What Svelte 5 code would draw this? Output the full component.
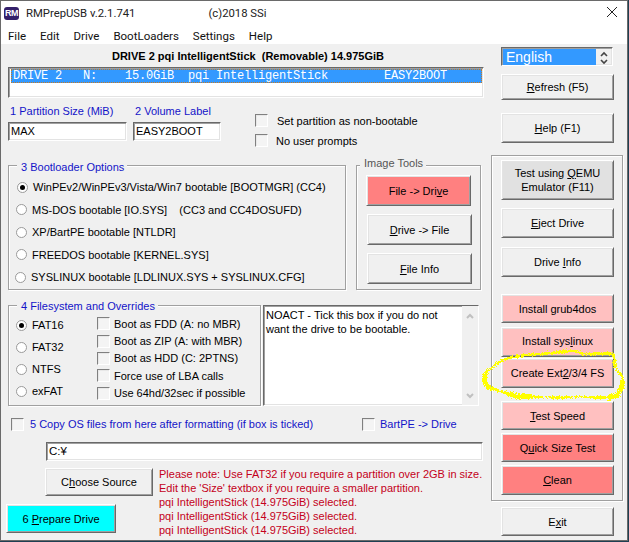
<script>
  const loaders = [
    { text: 'WinPEv2/WinPEv3/Vista/Win7 bootable [BOOTMGR] (CC4)', on: true, nudge: 1 },
    { text: 'MS-DOS bootable [IO.SYS]    (CC3 and CC4DOSUFD)', nudge: 0 },
    { text: 'XP/BartPE bootable [NTLDR]', nudge: 0 },
    { text: 'FREEDOS bootable [KERNEL.SYS]', nudge: 0 },
    { text: 'SYSLINUX bootable [LDLINUX.SYS + SYSLINUX.CFG]', nudge: -1 }
  ];
  const filesystems = [{ text: 'FAT16', on: true }, { text: 'FAT32' }, { text: 'NTFS' }, { text: 'exFAT' }];
  const overrides = ['Boot as FDD (A: no MBR)', 'Boot as ZIP (A: with MBR)', 'Boot as HDD (C: 2PTNS)', 'Force use of LBA calls', 'Use 64hd/32sec if possible'];
  const menu = ['File', 'Edit', 'Drive', 'BootLoaders', 'Settings', 'Help'];
  const row = 'DRIVE 2   N:    15.0GiB  pqi IntelligentStick        EASY2BOOT';
</script>

<div class="win">
  <header class="title">
    <span class="logo">RM</span>
    <span class="appname">RMPrepUSB v.2.1.741</span>
    <span class="copy">(c)2018 SSi</span>
    <svg class="close" width="10" height="10" viewBox="0 0 10 10"><path d="M0 0L10 10M10 0L0 10" stroke="#222" stroke-width="1" fill="none"/></svg>
  </header>
  <nav class="menu">
    {#each menu as m}<span>{m}</span>{/each}
  </nav>

  <div class="client">
    <main class="main">
      <div class="drive">DRIVE 2 pqi IntelligentStick&nbsp; (Removable) 14.975GiB</div>
      <div class="list sunken"><div class="sel">{row}</div></div>

      <div class="fields">
        <div class="field f1">
          <span class="blue">1 Partition Size (MiB)</span>
          <div class="input sunken">MAX</div>
        </div>
        <div class="field f2">
          <span class="blue">2 Volume Label</span>
          <div class="input sunken">EASY2BOOT</div>
        </div>
        <div class="topchecks">
          <div class="ck"><i class="box"></i><span>Set partition as non-bootable</span></div>
          <div class="ck second"><i class="box"></i><span>No user prompts</span></div>
        </div>
      </div>

      <div class="midrow">
        <section class="group g3">
          <span class="legend blue">3 Bootloader Options</span>
          {#each loaders as l}
            <div class="rad" style="margin-left:{l.nudge}px"><i class="radio" class:on={l.on}></i><span class="pre">{l.text}</span></div>
          {/each}
        </section>
        <section class="group tools">
          <span class="legend grey">Image Tools</span>
          <button class="btn red first">File -&gt; Dri<u>v</u>e</button>
          <button class="btn"><u>D</u>rive -&gt; File</button>
          <button class="btn"><u>F</u>ile Info</button>
        </section>
      </div>

      <div class="fsrow">
        <section class="group g4">
          <span class="legend blue">4 Filesystem and Overrides</span>
          <div class="fsradios">
            {#each filesystems as f}
              <div class="rad2"><i class="radio" class:on={f.on}></i><span>{f.text}</span></div>
            {/each}
          </div>
          <div class="fschecks">
            {#each overrides as o}
              <div class="ck2"><i class="box"></i><span>{o}</span></div>
            {/each}
          </div>
        </section>
        <div class="memo sunken">
          <div class="memotext">NOACT - Tick this box if you do not want the drive to be bootable.</div>
          <div class="scroll">
            <svg width="8" height="6" viewBox="0 0 8 6"><path d="M1 5L4 2L7 5" stroke="#c0c0c0" stroke-width="2" fill="none"/></svg>
            <svg width="8" height="6" viewBox="0 0 8 6"><path d="M1 1L4 4L7 1" stroke="#c0c0c0" stroke-width="2" fill="none"/></svg>
          </div>
        </div>
      </div>

      <div class="copyrow">
        <div class="ck3"><i class="box"></i><span class="blue">5 Copy OS files from here after formatting (if box is ticked)</span></div>
        <div class="ck4"><i class="box"></i><span class="blue">BartPE -&gt; Drive</span></div>
      </div>

      <div class="path sunken">C:¥</div>

      <div class="bottom">
        <div class="actions">
          <button class="btn choose">C<u>h</u>oose Source</button>
          <button class="btn prepare">6 <u>P</u>repare Drive</button>
        </div>
        <div class="log">
          <div>Please note: Use FAT32 if you require a partition over 2GB in size.</div>
          <div>Edit the 'Size' textbox if you require a smaller partition.</div>
          <div>pqi IntelligentStick (14.975GiB) selected.</div>
          <div>pqi IntelligentStick (14.975GiB) selected.</div>
          <div>pqi IntelligentStick (14.975GiB) selected.</div>
        </div>
      </div>
    </main>

    <aside class="side">
      <div class="lang sunken">
        <span class="langsel">English</span>
        <span class="spin">
          <svg width="8" height="6" viewBox="0 0 8 6"><path d="M1 5L4 2L7 5" stroke="#444" stroke-width="1.6" fill="none"/></svg>
          <svg width="8" height="6" viewBox="0 0 8 6"><path d="M1 1L4 4L7 1" stroke="#444" stroke-width="1.6" fill="none"/></svg>
        </span>
      </div>
      <button class="btn s refresh"><u>R</u>efresh (F5)</button>
      <button class="btn s help"><u>H</u>elp (F1)</button>
      <section class="group sidegroup">
        <button class="btn s qemu">Test using <u>Q</u>EMU<br />Emulator (F11)</button>
        <button class="btn s eject"><u>E</u>ject Drive</button>
        <button class="btn s info">Drive <u>I</u>nfo</button>
        <button class="btn s pink grub">Install <u>g</u>rub4dos</button>
        <button class="btn s pink sysl">Install sys<u>l</u>inux</button>
        <button class="btn s pink ext">Create Ext<u>2</u>/3/4 FS</button>
        <button class="btn s pink speed"><u>T</u>est Speed</button>
        <button class="btn s red quick">Q<u>u</u>ick Size Test</button>
        <button class="btn s red clean"><u>C</u>lean</button>
      </section>
      <button class="btn s exit">E<u>x</u>it</button>
    </aside>
  </div>

  <svg class="scribble" width="148" height="62" viewBox="0 0 148 62">
    <defs>
      <filter id="spray" x="-5%" y="-10%" width="110%" height="120%">
        <feTurbulence type="fractalNoise" baseFrequency="0.7" numOctaves="2" seed="4" />
        <feDisplacementMap in="SourceGraphic" scale="5" xChannelSelector="R" yChannelSelector="G" />
      </filter>
    </defs>
    <g filter="url(#spray)" fill="none" stroke="#ffff00" shape-rendering="crispEdges">
      <path d="M21 17C28 14 40 12 58 11C72 10 82 8 91 8C96 8 98 10 101 11C112 11 122 10 131 11C134 14 131 20 133 24C136 30 142 32 141 37C141 44 139 50 135 54C120 56 105 53 88 54C70 55 52 54 35 52C25 50 14 48 8 44C3 41 0 38 1 35C2 30 6 27 11 24C14 20 17 19 21 17Z" stroke-width="2.5"/>
      <path d="M3 31C1 38 5 43 10 46M26 50C32 54 42 55 50 53M126 54C134 55 140 48 141 37" stroke-width="5"/>
    </g>
  </svg>
</div>

<style>
  :global(body) { margin: 0; background: #1f3f52; overflow: hidden; }
  * { box-sizing: border-box; }
  .win {
    position: relative;
    width: 628px;
    height: 541px;
    border: 1px solid #6a6a6a;
    background: #f0f0f0;
    font: 11px "Liberation Sans", Arial, sans-serif;
    color: #000;
    display: flex;
    flex-direction: column;
    overflow: hidden;
  }
  .title {
    height: 24px;
    flex: none;
    background: #fff;
    display: flex;
    align-items: center;
    padding: 0 0 0 3px;
    font: 11.3px Roboto, sans-serif;
    color: #222;
  }
  .logo {
    width: 15px;
    height: 13px;
    background: #34206a;
    color: #fff;
    border-radius: 3px;
    font: bold 9px/13px "Liberation Sans", sans-serif;
    letter-spacing: -0.5px;
    text-align: center;
  }
  .appname { margin-left: 7px; }
  .copy { margin-left: 73px; }
  .close { margin-left: auto; margin-right: 10px; margin-top: -3px; }
  .menu {
    height: 19px;
    flex: none;
    background: #fff;
    display: flex;
    gap: 14px;
    padding: 2px 0 0 7px;
    font: 11.5px/18px Roboto, sans-serif;
    color: #111;
  }
  .client {
    flex: 1;
    display: grid;
    grid-template-columns: 490px 1fr;
  }
  .main { display: flex; flex-direction: column; padding-left: 7px; }
  .drive {
    margin-top: 4px;
    height: 16px;
    line-height: 16px;
    font-weight: bold;
    text-align: center;
    width: 480px;
    white-space: pre;
  }
  .sunken {
    border-top: 1px solid #696969;
    border-left: 1px solid #696969;
    border-right: 1px solid #fff;
    border-bottom: 1px solid #fff;
    box-shadow: inset 1px 1px 0 #a0a0a0, inset -1px -1px 0 #e3e3e3;
    background: #fff;
  }
  .list { margin-top: 3px; width: 476px; height: 31px; padding: 1px 1px 0 2px; }
  .sel {
    height: 14px;
    background: #3399ff;
    color: #fff;
    outline: 1px dotted #c97a20;
    outline-offset: -1px;
    font: 12px/14px "Liberation Mono", monospace;
    letter-spacing: -0.2px;
    white-space: pre;
    padding-left: 2px;
  }
  .blue { color: #1414c8; }
  .grey { color: #555; }
  .fields { display: flex; margin-top: 6px; height: 43px; }
  .field { display: flex; flex-direction: column; }
  .field span { margin-left: 2px; height: 18px; line-height: 15px; }
  .f1 { width: 125px; }
  .f2 { width: 122px; }
  .f1 .input { width: 119px; }
  .f2 .input { width: 88px; }
  .input { height: 19px; line-height: 17px; padding-left: 2px; font-size: 11px; }
  .topchecks { display: flex; flex-direction: column; padding-top: 10px; }
  .ck { display: flex; align-items: center; gap: 9px; height: 14px; }
  .ck.second { margin-top: 7px; gap: 8px; }
  .box {
    width: 13px;
    height: 13px;
    flex: none;
    background: #f4f4f4;
    border-top: 1px solid #808080;
    border-left: 1px solid #808080;
    border-right: 1px solid #fff;
    border-bottom: 1px solid #fff;
    box-shadow: inset 1px 1px 0 #e8e8e8;
  }
  .midrow { display: flex; gap: 10px; margin-top: 18px; }
  .group {
    position: relative;
    border: 1px solid #a0a0a0;
    box-shadow: 1px 1px 0 #fff, inset 1px 1px 0 #fff;
  }
  .legend {
    position: absolute;
    top: -7px;
    left: 8px;
    padding: 0 3px 0 4px;
    background: #f0f0f0;
    line-height: 14px;
    white-space: nowrap;
  }
  .tools .legend { top: -10px; left: 3px; }
  .g3 { width: 338px; height: 125px; padding: 10px 0 0 7px; }
  .g3 .legend { top: -6px; }
  .rad { display: flex; align-items: center; gap: 5px; height: 22.5px; }
  .pre { white-space: pre; }
  .radio {
    width: 11px;
    height: 11px;
    flex: none;
    border-radius: 50%;
    background: #fff;
    border: 1px solid #9a9a9a;
    position: relative;
  }
  .radio.on::after {
    content: "";
    position: absolute;
    left: 2px;
    top: 2px;
    width: 5px;
    height: 5px;
    border-radius: 50%;
    background: #000;
  }
  .tools { width: 125px; height: 125px; display: flex; flex-direction: column; padding: 9px 0 0 10px; }
  .btn {
    display: block;
    padding: 0;
    margin: 0;
    font: inherit;
    color: #000;
    text-align: center;
    background: #f0f0f0;
    border-top: 1px solid #fff;
    border-left: 1px solid #fff;
    border-right: 1px solid #696969;
    border-bottom: 1px solid #696969;
    box-shadow: inset 1px 1px 0 #e3e3e3, inset -1px -1px 0 #a0a0a0;
    line-height: 14px;
  }
  .red { background: #ff8080; }
  .pink { background: #ffc0c0; }
  .tools .btn { width: 105px; height: 31px; }
  .tools .btn + .btn { margin-top: 8px; }
  .tools .first { margin-left: -1px; }
  .fsrow { display: flex; gap: 2px; margin-top: 15px; }
  .g4 { width: 253px; height: 101px; display: flex; padding: 8px 0 0 7px; }
  .fsradios { width: 81px; }
  .rad2 { display: flex; align-items: center; gap: 5px; height: 22px; }
  .fschecks { margin-top: 1px; }
  .ck2 { display: flex; align-items: center; gap: 4px; height: 17.4px; }
  .memo { width: 216px; height: 101px; display: flex; line-height: 14px; }
  .memotext { flex: 1; padding: 2px 2px 0 2px; }
  .scroll {
    width: 16px;
    background: #f0f0f0;
    display: flex;
    flex-direction: column;
    justify-content: space-between;
    align-items: center;
    padding: 7px 0 6px;
  }
  .copyrow { display: flex; height: 16px; margin-top: 10px; align-items: center; }
  .ck3 { display: flex; align-items: center; gap: 6px; width: 351px; margin-left: 3px; flex: none; }
  .ck4 { display: flex; align-items: center; gap: 5px; }
  .path { margin: 10px 0 0 38px; width: 437px; height: 19px; line-height: 17px; padding-left: 2px; font-size: 11.5px; }
  .bottom { display: flex; margin: 7px 0 0 -2px; }
  .actions { width: 153px; flex: none; display: flex; flex-direction: column; }
  .choose { margin-left: 39px; width: 108px; height: 28px; }
  .prepare { margin-top: 8px; width: 110px; height: 29px; background: #00ffff; }
  .log { color: #c40020; line-height: 14px; margin-top: -1px; white-space: nowrap; }
  .side { display: flex; flex-direction: column; }
  .s { width: 113px; margin-left: 10px; flex: none; }
  .lang {
    margin: 3px 0 0 10px;
    width: 112px;
    height: 19px;
    display: flex;
    background: #f0f0f0;
  }
  .langsel {
    flex: 1;
    background: #3399ff;
    color: #fff;
    font-size: 14px;
    line-height: 16px;
    padding-left: 3px;
    margin: 1px 0 0 1px;
  }
  .spin { width: 16px; display: flex; flex-direction: column; align-items: center; gap: 2px; padding-top: 3px; }
  .refresh { margin-top: 8px; height: 26px; }
  .help { margin-top: 13px; height: 30px; }
  .sidegroup { margin-top: 12px; width: 132px; height: 346px; padding-top: 4px; display: flex; flex-direction: column; }
  .qemu { height: 40px; background: #e1e1e1; }
  .sidegroup .s { margin-left: 9px; }
  .eject { margin-top: 8px; height: 30px; }
  .info { margin-top: 9px; height: 30px; }
  .grub { margin-top: 17px; height: 29px; }
  .sysl { margin-top: 4px; height: 30px; padding-bottom: 3px; }
  .ext { margin-top: 1px; height: 30px; }
  .speed { margin-top: 13px; height: 29px; }
  .quick { margin-top: 3px; height: 29px; }
  .clean { margin-top: 3px; height: 30px; }
  .exit { margin-top: 6px; height: 29px; }
  .scribble { position: absolute; left: 481px; top: 342px; pointer-events: none; }
</style>
